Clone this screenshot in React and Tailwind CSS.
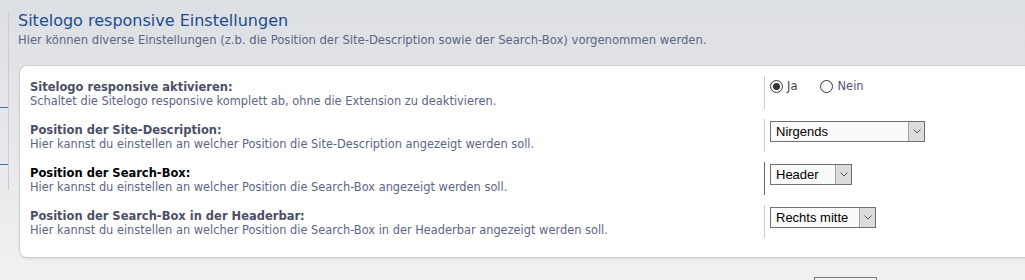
import React from "react";

const rows = [
  {
    label: "Sitelogo responsive aktivieren:",
    desc: "Schaltet die Sitelogo responsive komplett ab, ohne die Extension zu deaktivieren.",
    type: "radio",
  },
  {
    label: "Position der Site-Description:",
    desc: "Hier kannst du einstellen an welcher Position die Site-Description angezeigt werden soll.",
    type: "select",
    value: "Nirgends",
    width: "w-[155px]",
  },
  {
    label: "Position der Search-Box:",
    desc: "Hier kannst du einstellen an welcher Position die Search-Box angezeigt werden soll.",
    type: "select",
    value: "Header",
    width: "w-[82px]",
    active: true,
  },
  {
    label: "Position der Search-Box in der Headerbar:",
    desc: "Hier kannst du einstellen an welcher Position die Search-Box in der Headerbar angezeigt werden soll.",
    type: "select",
    value: "Rechts mitte",
    width: "w-[106px]",
  },
];

function Radio({ checked, label, labelClass }) {
  return (
    <label className="flex items-center gap-[4px]">
      <span className="flex h-[13px] w-[13px] items-center justify-center rounded-full border border-[#333] bg-white">
        {checked && <span className="h-[7px] w-[7px] rounded-full bg-[#333]" />}
      </span>
      <span className={labelClass}>{label}</span>
    </label>
  );
}

function FakeSelect({ value, width }) {
  return (
    <div className={`flex h-[21px] ${width} border border-[#707070] bg-[#fafafa]`}>
      <span className="flex-1 pl-[5px] font-['Liberation_Sans',Arial,sans-serif] text-[13px] leading-[19px] text-black">
        {value}
      </span>
      <span className="flex w-[16px] items-center justify-center border-l border-[#a0a0a0] bg-[#dcdcdc]">
        <svg width="8" height="5" viewBox="0 0 8 5">
          <path d="M0.5 0.5 L4 4 L7.5 0.5" fill="none" stroke="#555" strokeWidth="1" />
        </svg>
      </span>
    </div>
  );
}

function SettingRow({ row }) {
  return (
    <div className="flex h-[33px]">
      <div className="w-[744px] pl-[10px] pt-[4px]">
        <div className={`text-[11.5px] font-bold leading-[14px] ${row.active ? "text-black" : "text-[#4b4f66]"}`}>
          {row.label}
        </div>
        <div className="text-[11.4px] leading-[15px] text-[#5c6589]">{row.desc}</div>
      </div>
      <div className={`border-l pl-[5px] pt-[2px] ${row.active ? "border-[#666]" : "border-[#cccccc]"}`}>
        {row.type === "radio" ? (
          <div className="flex items-center gap-[23px] text-[11.5px]">
            <Radio checked label="Ja" labelClass="text-[#444]" />
            <Radio label="Nein" labelClass="text-[#5a4f80]" />
          </div>
        ) : (
          <FakeSelect value={row.value} width={row.width} />
        )}
      </div>
    </div>
  );
}

export default function App() {
  return (
    <div className="flex h-[280px] w-[1025px] overflow-hidden bg-gradient-to-b from-[#dcdfe3] to-[#f1f1f1] font-['DejaVu_Sans',Verdana,sans-serif]">
      {/* sidebar edge */}
      <div className="w-[9px] shrink-0 pt-[12px]">
        <div className="h-[178px] border-r border-[#c9cdd3] pt-[95px]">
          <div className="border-b border-[#3b78b6]" />
          <div className="mt-[56px] border-b border-[#3b78b6]" />
        </div>
      </div>

      <div className="min-w-0 flex-1 pl-[9px] pt-[10px]">
        <h2 className="text-[16px] leading-[22px] text-[#1d4c8e]">Sitelogo responsive Einstellungen</h2>
        <p className="text-[11.6px] leading-[16px] text-[#5a6682]">
          Hier können diverse Einstellungen (z.b. die Position der Site-Description sowie der Search-Box) vorgenommen werden.
        </p>

        <div className="mt-[17px] ml-[1px] mr-[-20px] flex flex-col gap-[10px] rounded-l-[8px] border border-[#cfcfcf] bg-white pt-[10px] pb-[19px] shadow-[0_1px_2px_rgba(0,0,0,0.08)]">
          {rows.map((row) => (
            <SettingRow key={row.label} row={row} />
          ))}
        </div>

        <div className="mt-[19px] ml-[796px] h-[20px] w-[63px] border border-[#777] bg-[#f4f4f4]" />
      </div>
    </div>
  );
}
